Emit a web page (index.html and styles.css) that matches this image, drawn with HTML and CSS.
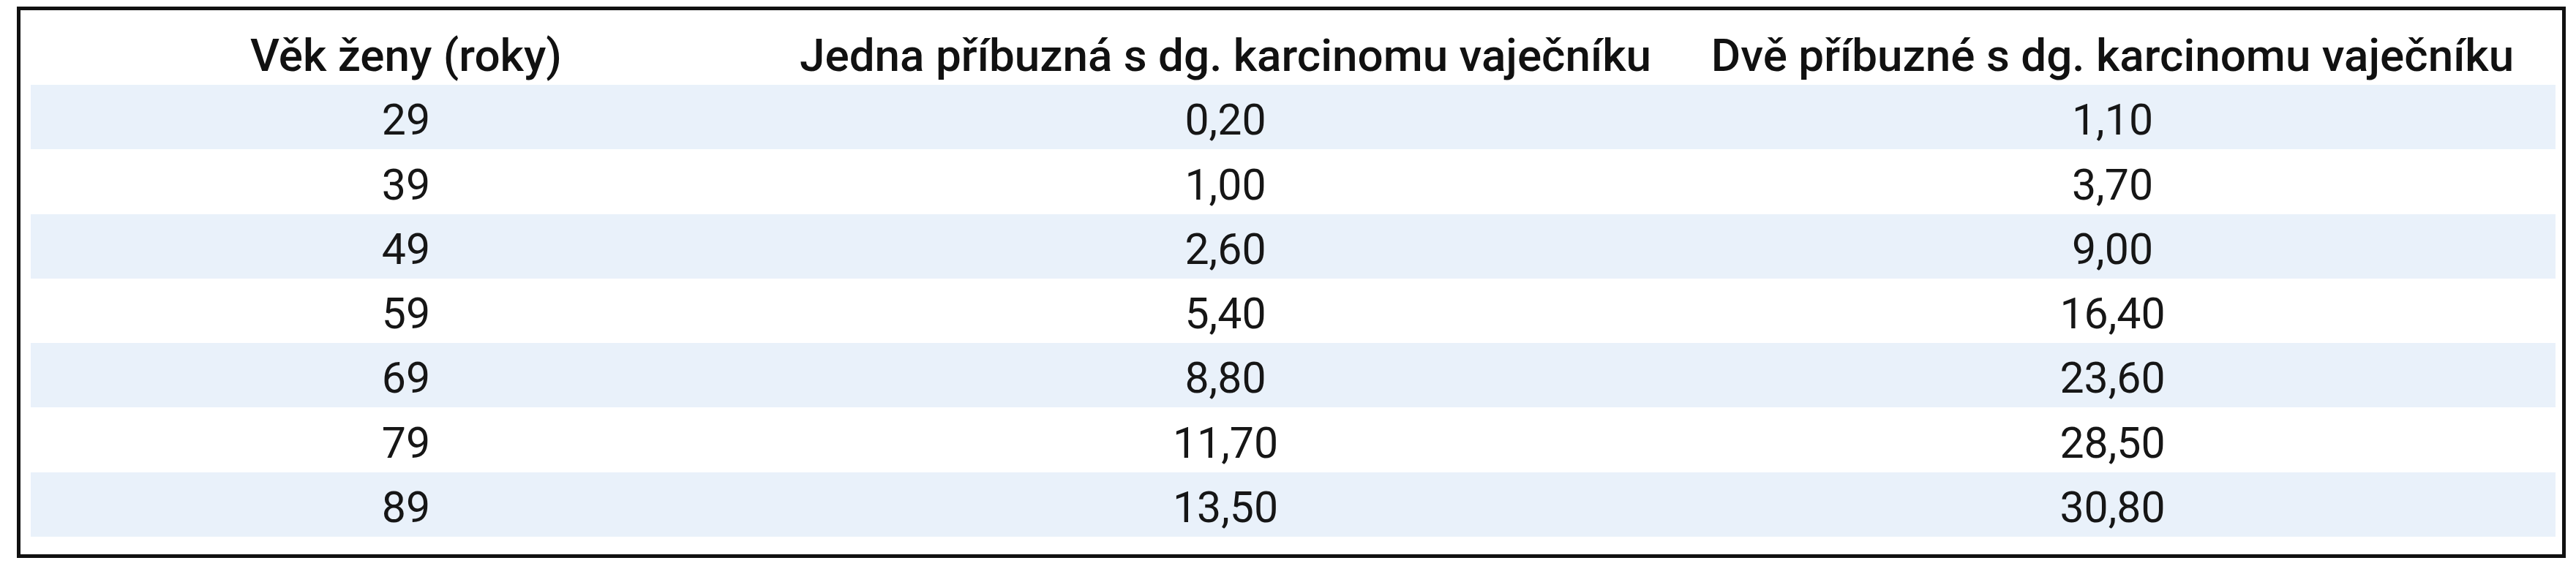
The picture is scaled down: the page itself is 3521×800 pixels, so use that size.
FILE: index.html
```html
<!DOCTYPE html>
<html lang="cs">
<head>
<meta charset="utf-8">
<title>Riziko karcinomu vaječníku</title>
<link rel="stylesheet" href="styles.css">
</head>
<body>
<div class="frame">
  <table class="risk">
    <colgroup>
      <col class="c-age">
      <col class="c-one">
      <col class="c-two">
    </colgroup>
    <thead>
      <tr>
        <th>Věk ženy (roky)</th>
        <th>Jedna příbuzná s dg. karcinomu vaječníku</th>
        <th>Dvě příbuzné s dg. karcinomu vaječníku</th>
      </tr>
    </thead>
    <tbody>
      <tr class="shade"><td>29</td><td>0,20</td><td>1,10</td></tr>
      <tr><td>39</td><td>1,00</td><td>3,70</td></tr>
      <tr class="shade"><td>49</td><td>2,60</td><td>9,00</td></tr>
      <tr><td>59</td><td>5,40</td><td>16,40</td></tr>
      <tr class="shade"><td>69</td><td>8,80</td><td>23,60</td></tr>
      <tr><td>79</td><td>11,70</td><td>28,50</td></tr>
      <tr class="shade"><td>89</td><td>13,50</td><td>30,80</td></tr>
    </tbody>
  </table>
</div>
</body>
</html>
```

FILE: styles.css
```css
html, body {
  margin: 0;
  padding: 0;
  background: #ffffff;
}

body {
  font-family: Roboto, "Liberation Sans", sans-serif;
  color: #141414;
}

.frame {
  margin: 9px 0 0 23px;
  width: 3484px;
  box-sizing: border-box;
  border: 5px solid #111111;
  padding: 0 9px 24px 14px;
  background: #ffffff;
}

.risk {
  border-collapse: collapse;
  border-spacing: 0;
  table-layout: fixed;
  width: 3451px;
}

.c-age { width: 1026px; }
.c-one { width: 1214px; }
.c-two { width: 1211px; }

.risk th {
  height: 102px;
  padding: 0 0 9px 0;
  box-sizing: border-box;
  vertical-align: bottom;
  text-align: center;
  font-size: 62px;
  font-weight: 500;
  line-height: 1;
  white-space: nowrap;
  color: #111111;
}

.risk td {
  height: 88.3px;
  padding: 0 0 11px 0;
  box-sizing: border-box;
  vertical-align: bottom;
  text-align: center;
  font-size: 59px;
  font-weight: 400;
  line-height: 1;
  white-space: nowrap;
  color: #161616;
}

.risk tr.shade td {
  background: #e9f1fa;
}
```
